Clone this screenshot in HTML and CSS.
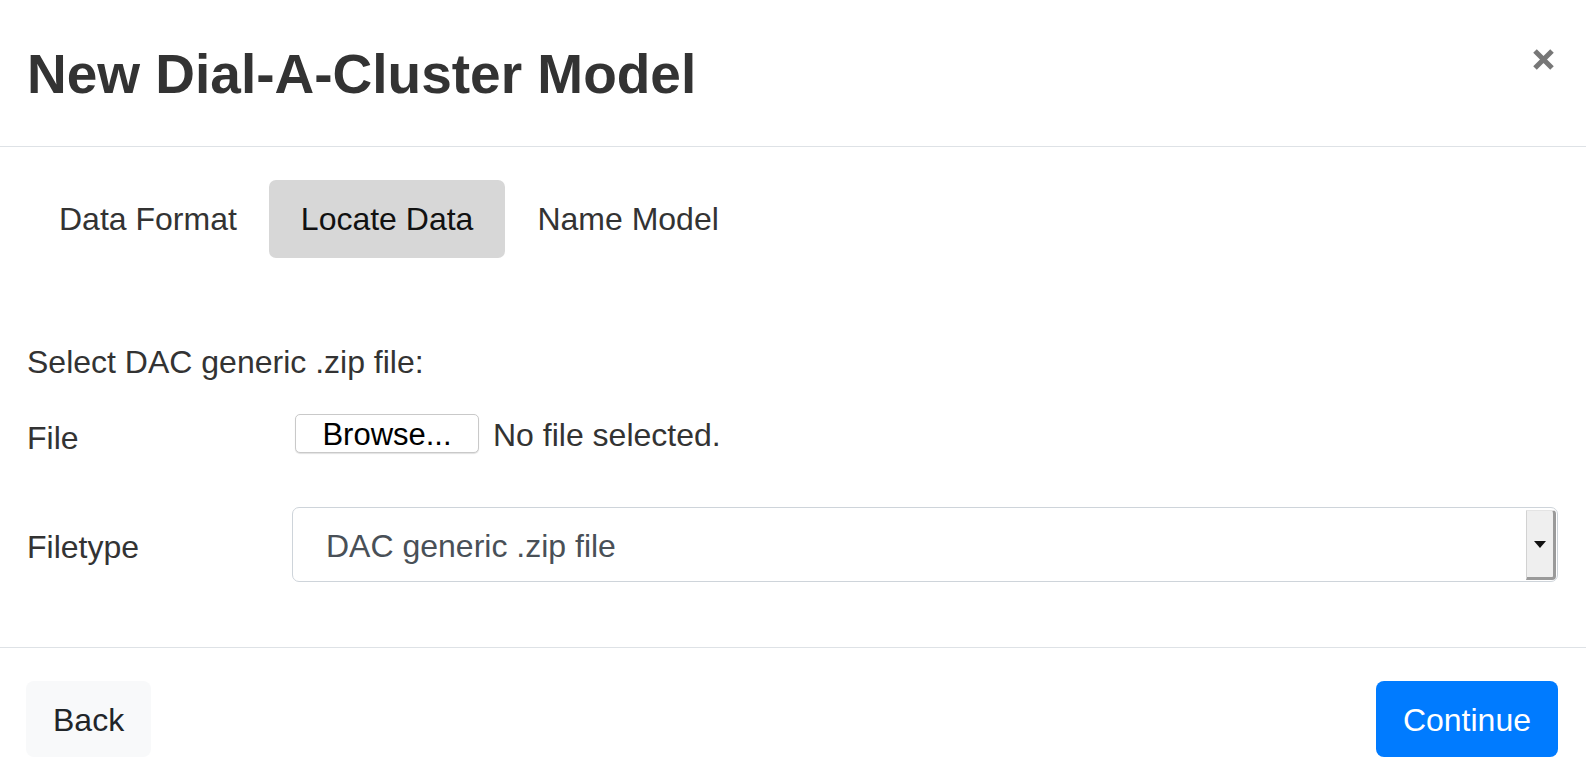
FILE: index.html
```html
<!DOCTYPE html>
<html lang="en">
<head>
<meta charset="utf-8">
<title>New Dial-A-Cluster Model</title>
<link rel="stylesheet" href="styles.css">
</head>
<body>
<div class="modal">
  <header class="modal-header">
    <h1 class="modal-title">New Dial-A-Cluster Model</h1>
    <button class="close" type="button" aria-label="Close">
      <svg width="23" height="23" viewBox="0 0 23 23" aria-hidden="true">
        <path d="M3 3 L20 20 M20 3 L3 20" stroke="#777" stroke-width="5" stroke-linecap="butt" fill="none"/>
      </svg>
    </button>
  </header>
  <main class="modal-body">
    <nav class="tabs">
      <span class="tab">Data Format</span>
      <span class="tab active">Locate Data</span>
      <span class="tab">Name Model</span>
    </nav>
    <p class="prompt">Select DAC generic .zip file:</p>
    <div class="form-row file-row">
      <label class="label">File</label>
      <div class="control file-control">
        <span class="browse">Browse...</span>
        <span class="nofile">No file selected.</span>
      </div>
    </div>
    <div class="form-row type-row">
      <label class="label type-label">Filetype</label>
      <div class="control select-wrap">
        <div class="select">DAC generic .zip file</div>
        <span class="select-btn"><span class="arrow"></span></span>
      </div>
    </div>
  </main>
  <footer class="modal-footer">
    <button class="btn btn-light" type="button">Back</button>
    <button class="btn btn-primary" type="button">Continue</button>
  </footer>
</div>
</body>
</html>
```
FILE: styles.css
```css
* { box-sizing: border-box; }
html, body {
  margin: 0;
  padding: 0;
  background: #fff;
  font-family: "Liberation Sans", Arial, Helvetica, sans-serif;
  color: #333;
}
.modal {
  width: 1586px;
  height: 784px;
  overflow: hidden;
}
.modal-header {
  display: flex;
  justify-content: space-between;
  align-items: flex-start;
  padding: 41px 31px 39px 27px;
  border-bottom: 1px solid #dee2e6;
  height: 147px;
}
.modal-title {
  margin: 0;
  font-size: 55px;
  line-height: 66px;
  font-weight: bold;
  color: #333;
}
.close {
  margin-top: 7px;
  padding: 0;
  border: 0;
  background: none;
  width: 23px;
  height: 23px;
  display: block;
}
.close svg { display: block; }
.modal-body {
  height: 501px;
  padding: 33px 28px 0 27px;
  border-bottom: 1px solid #dee2e6;
}
.tabs {
  display: flex;
}
.tab {
  font-size: 32px;
  line-height: 48px;
  padding: 15px 32px;
  border-radius: 7px;
  color: #333;
}
.tab.active {
  background: #d7d7d7;
  color: #111;
}
.prompt {
  margin: 80px 0 28px 0;
  font-size: 32px;
  line-height: 48px;
  color: #333;
}
.form-row {
  display: grid;
  grid-template-columns: 265px 1fr;
  align-items: center;
}
.label {
  font-size: 32px;
  line-height: 48px;
  color: #333;
}
.type-label { padding-top: 4px; }
.file-row { align-items: start; }
.file-control {
  display: flex;
  align-items: flex-start;
  gap: 14px;
  height: 39px;
}
.browse {
  margin-left: 3px;
  height: 39px;
  width: 184px;
  border: 1px solid #c9c9c9;
  border-radius: 5px;
  box-shadow: 0 1px 1px rgba(0,0,0,0.12);
  background: #fff;
  color: #000;
  font-size: 31px;
  line-height: 34px;
  padding-top: 3px;
  text-align: center;
}
.nofile {
  font-size: 32px;
  line-height: 37px;
  padding-top: 3px;
  color: #333;
}
.type-row { margin-top: 45px; }
.select-wrap {
  position: relative;
  height: 75px;
}
.select {
  height: 75px;
  border: 1px solid #ced4da;
  border-radius: 7px;
  padding: 4px 34px 0 33px;
  font-size: 32px;
  line-height: 69px;
  color: #495057;
  background: #fff;
}
.select-btn {
  position: absolute;
  top: 3px;
  right: 2px;
  width: 30px;
  height: 70px;
  background: #efefef;
  border-left: 1px solid #d2d2d2;
  border-top: 1px solid #e4e4e4;
  border-right: 3px solid #9a9a9a;
  border-bottom: 3px solid #9a9a9a;
  border-radius: 0 4px 4px 0;
  display: flex;
  align-items: center;
  justify-content: center;
}
.arrow {
  width: 0;
  height: 0;
  border-left: 6px solid transparent;
  border-right: 6px solid transparent;
  border-top: 7px solid #111;
  margin-right: 1px;
}
.modal-footer {
  display: flex;
  justify-content: space-between;
  align-items: flex-start;
  padding: 33px 28px 0 26px;
}
.btn {
  font-family: "Liberation Sans", Arial, Helvetica, sans-serif;
  font-size: 32px;
  line-height: 48px;
  padding: 15px 27px 13px;
  border: 0;
  border-radius: 8px;
  height: 76px;
}
.btn-light {
  background: #f8f9fa;
  color: #212529;
}
.btn-primary {
  background: #007bff;
  color: #fff;
}
```
